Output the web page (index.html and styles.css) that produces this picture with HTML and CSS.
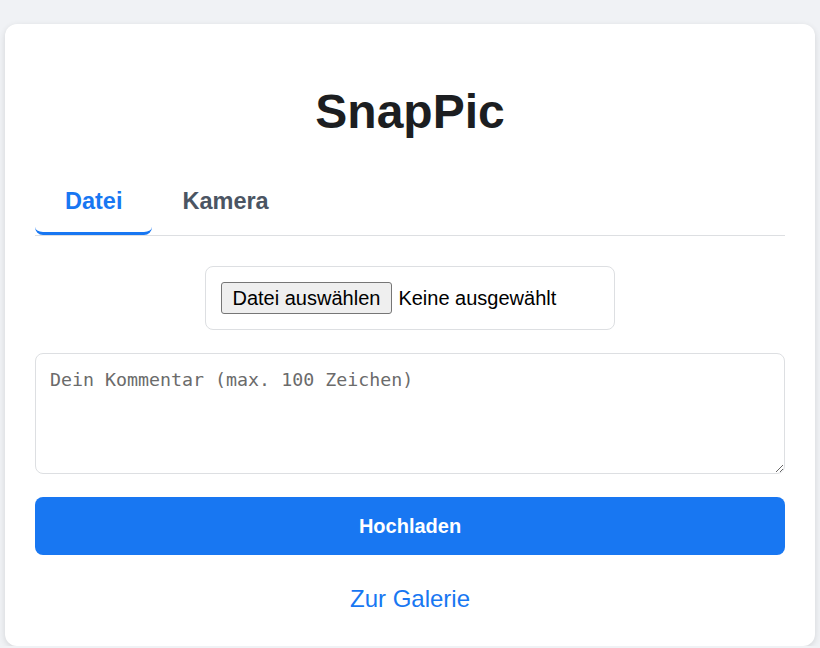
FILE: index.html
```html
<!DOCTYPE html>
<html lang="de">
<head>
<meta charset="utf-8">
<title>SnapPic</title>
<link rel="stylesheet" href="styles.css">
</head>
<body>
<main class="card">
  <h1 class="title">SnapPic</h1>
  <div class="tabs">
    <button class="tab active" type="button">Datei</button>
    <button class="tab" type="button">Kamera</button>
  </div>
  <div class="file-box">
    <label class="file-picker">
      <input class="file-input" type="file" accept="image/*">
      <span class="file-button">Datei auswählen</span>
      <span class="file-name">Keine ausgewählt</span>
    </label>
  </div>
  <textarea class="comment" maxlength="100" placeholder="Dein Kommentar (max. 100 Zeichen)"></textarea>
  <button class="upload" type="button">Hochladen</button>
  <div class="gallery"><a class="gallery-link" href="#">Zur Galerie</a></div>
</main>
</body>
</html>
```

FILE: styles.css
```css
html, body {
  margin: 0;
  padding: 0;
}
body {
  background: #f0f2f5;
  font-family: "Liberation Sans", Arial, sans-serif;
  padding: 24px 5px 0;
}
.card {
  background: #fff;
  border-radius: 12px;
  box-shadow: 0 2px 6px rgba(0, 0, 0, 0.12);
  padding: 30px;
  display: flex;
  flex-direction: column;
}
.title {
  margin: 30px 0 32px;
  font-size: 48px;
  font-weight: bold;
  line-height: 55px;
  color: #1c1e21;
  text-align: center;
}
.tabs {
  display: flex;
  border-bottom: 1px solid #dddfe2;
  margin-bottom: 30px;
}
.tab {
  font-family: "Liberation Sans", Arial, sans-serif;
  font-size: 23.5px;
  font-weight: bold;
  line-height: 26px;
  padding: 17px 30px 18px;
  background: none;
  border: none;
  border-bottom: 3px solid transparent;
  border-radius: 8px;
  color: #4b5563;
  cursor: pointer;
}
.tab.active {
  color: #1877f2;
  border-bottom-color: #1877f2;
}
.file-box {
  align-self: center;
  width: 410px;
  box-sizing: border-box;
  border: 1px solid #dddfe2;
  border-radius: 8px;
  padding: 15px;
  margin-left: -1px;
}
.file-picker {
  display: flex;
  align-items: center;
  font-size: 20px;
  color: #000;
  cursor: pointer;
}
.file-input {
  display: none;
}
.file-button {
  font-size: 20px;
  line-height: 24px;
  padding: 3px 11px;
  margin-right: 6px;
  border: 1px solid #767676;
  border-radius: 3px;
  background: #efefef;
  color: #000;
}
.file-name {
  line-height: 24px;
}
.comment {
  margin-top: 23px;
  height: 121px;
  box-sizing: border-box;
  border: 1px solid #dddfe2;
  border-radius: 8px;
  padding: 15px 14px;
  font-family: "DejaVu Sans Mono", monospace;
  font-size: 18.3px;
  color: #1c1e21;
}
.comment::placeholder {
  color: #6b6b6b;
}
.upload {
  margin-top: 23px;
  background: #1877f2;
  color: #fff;
  border: none;
  border-radius: 8px;
  font-family: "Liberation Sans", Arial, sans-serif;
  font-size: 20px;
  font-weight: bold;
  line-height: 24px;
  padding: 17px 0;
  cursor: pointer;
}
.gallery {
  margin-top: 30px;
  text-align: center;
  line-height: 28px;
}
.gallery-link {
  font-size: 24px;
  color: #1877f2;
  text-decoration: none;
}
```
